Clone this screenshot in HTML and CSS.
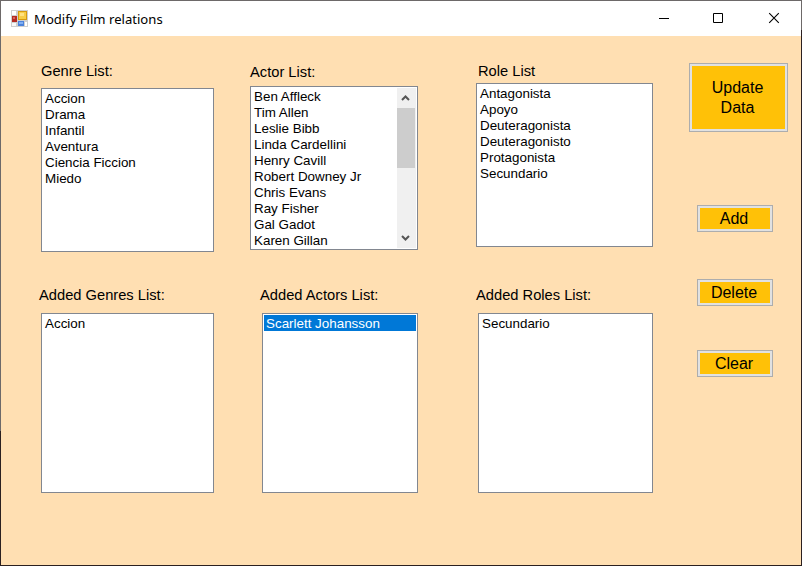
FILE: index.html
```
<!DOCTYPE html>
<html lang="en">
<head>
<meta charset="utf-8">
<title>Modify Film relations</title>
<link rel="stylesheet" href="styles.css">
</head>
<body>
<div class="window">
  <header class="titlebar">
    <svg class="app-icon" width="17" height="17" viewBox="0 0 17 17" shape-rendering="crispEdges">
      <rect width="17" height="17" fill="#cfcfcf"/>
      <rect x="1" y="1" width="4" height="4" fill="#fff"/>
      <rect x="1" y="6" width="5" height="6" fill="#b52a22"/>
      <rect x="2" y="7" width="2" height="2" fill="#d9645a"/>
      <rect x="1" y="13" width="4" height="3" fill="#f8f8f8"/>
      <rect x="7" y="1" width="9" height="9" fill="#d69a10"/>
      <rect x="8" y="2" width="7" height="7" fill="#f8cd45"/>
      <rect x="9" y="3" width="4" height="3" fill="#ffe282"/>
      <rect x="7" y="11" width="6" height="5" fill="#4a82dc"/>
      <rect x="8" y="12" width="4" height="2" fill="#82b0f2"/>
      <rect x="14" y="12" width="2" height="4" fill="#fff"/>
    </svg>
    <span class="title">Modify Film relations</span>
    <div class="controls">
      <svg width="54" height="35" viewBox="0 0 54 35"><path d="M19 17.5h10" stroke="#000"/></svg>
      <svg width="56" height="35" viewBox="0 0 56 35"><path d="M19.500 12.500h9v9h-9z" fill="none" stroke="#000"/></svg>
      <svg width="56" height="35" viewBox="0 0 56 35"><path d="M19.200 12.200l9.600 9.600M28.800 12.200l-9.600 9.600" fill="none" stroke="#000" stroke-width="1.100"/></svg>
    </div>
  </header>
  <main class="form">
    <section class="column genres">
      <h2>Genre List:</h2>
      <ul class="listbox"><li>Accion</li><li>Drama</li><li>Infantil</li><li>Aventura</li><li>Ciencia Ficcion</li><li>Miedo</li></ul>
      <h2 class="added-label">Added Genres List:</h2>
      <ul class="listbox added"><li>Accion</li></ul>
    </section>
    <section class="column actors">
      <h2>Actor List:</h2>
      <div class="listbox scrolling">
        <ul><li>Ben Affleck</li><li>Tim Allen</li><li>Leslie Bibb</li><li>Linda Cardellini</li><li>Henry Cavill</li><li>Robert Downey Jr</li><li>Chris Evans</li><li>Ray Fisher</li><li>Gal Gadot</li><li>Karen Gillan</li></ul>
        <div class="scrollbar">
          <svg width="18" height="20" viewBox="0 0 18 20"><path d="M5 12l3.500-3.500 3.500 3.500" fill="none" stroke="#555" stroke-width="2"/></svg>
          <div class="thumb"></div>
          <svg class="down" width="18" height="20" viewBox="0 0 18 20"><path d="M5 8l3.500 3.500 3.500-3.500" fill="none" stroke="#555" stroke-width="2"/></svg>
        </div>
      </div>
      <h2 class="added-label">Added Actors List:</h2>
      <ul class="listbox added"><li class="selected">Scarlett Johansson</li></ul>
    </section>
    <section class="column roles">
      <h2>Role List</h2>
      <ul class="listbox"><li>Antagonista</li><li>Apoyo</li><li>Deuteragonista</li><li>Deuteragonisto</li><li>Protagonista</li><li>Secundario</li></ul>
      <h2 class="added-label">Added Roles List:</h2>
      <ul class="listbox added"><li>Secundario</li></ul>
    </section>
    <section class="actions">
      <button class="update">Update<br>Data</button>
      <button class="add">Add</button>
      <button class="delete">Delete</button>
      <button class="clear">Clear</button>
    </section>
  </main>
</div>
</body>
</html>
```
FILE: styles.css
```
* { box-sizing: border-box; }
body { margin: 0; font-family: "Liberation Sans", Arial, sans-serif; color: #000; }
.window {
  width: 802px; height: 566px; display: flex; flex-direction: column;
  padding: 1px; overflow: hidden;
  background:
    linear-gradient(#6d6969, #6d6969) 0 0 / 100% 1px no-repeat,
    linear-gradient(#6d6969, #6d6969) 0 0 / 1px 431px no-repeat,
    linear-gradient(#6d6969, #6d6969) 100% 0 / 1px 30px no-repeat,
    #2b2020;
}
.titlebar { height: 35px; flex: none; display: flex; align-items: center; background: #fff; padding-left: 10px; }
.app-icon { margin-right: 6px; }
.title { font: 13.1px/18px "Noto Sans", sans-serif; white-space: nowrap; }
.controls { display: flex; margin-left: auto; margin-right: -5px; }
.form { flex: 1; display: grid; grid-template-columns: 209px 226px 213px 1fr; padding-left: 40px; background: #ffdfb2; }
h2 { margin: 0; font-size: 14.7px; line-height: 18px; font-weight: 400; white-space: nowrap; }
ul { margin: 0; padding: 0; list-style: none; }
li { height: 16px; padding-left: 2px; font-size: 13.4px; line-height: 17px; white-space: nowrap; }
.listbox { height: 164px; border: 1px solid #828790; padding: 1px; background: #fff; }
.listbox.added { height: 180px; }
.selected { background: #0078d7; color: #fff; }

.genres { padding-top: 26px; }
.genres .listbox { width: 173px; margin-top: 8px; }
.genres .added-label { margin: 34px 0 0 -2px; }
.genres .listbox.added { margin-top: 9px; }

.actors { padding-top: 27px; }
.actors .listbox { width: 168px; margin-top: 5px; }
.actors .added-label { margin: 36px 0 0 10px; }
.actors .listbox.added { width: 156px; margin: 9px 0 0 12px; }

.roles { padding-top: 26px; }
.roles h2 { margin-left: 2px; }
.roles .listbox { width: 177px; margin-top: 3px; }
.roles .added-label { margin: 39px 0 0; }
.roles .listbox.added { width: 175px; margin: 9px 0 0 2px; }

.scrolling { display: flex; justify-content: space-between; overflow: hidden; }
.scrollbar { width: 19px; display: flex; flex-direction: column; background: #f0f0f0; }
.thumb { height: 60px; width: 18px; background: #cdcdcd; }
.down { margin-top: auto; }

.actions { display: flex; flex-direction: column; padding-top: 27px; }
button {
  width: 76px; height: 27px; margin-left: 8px; padding: 0 2px 0 0;
  border: 1px solid #adadad; box-shadow: inset 0 0 0 2px #e1e1e1;
  border-radius: 0; background: #ffc107; color: #000;
  font: 16px/20px "Liberation Sans", Arial, sans-serif;
}
.update { width: 99px; height: 69px; margin-left: 0; }
.add { margin-top: 73px; }
.delete { margin-top: 47px; }
.clear { margin-top: 44px; }
```
